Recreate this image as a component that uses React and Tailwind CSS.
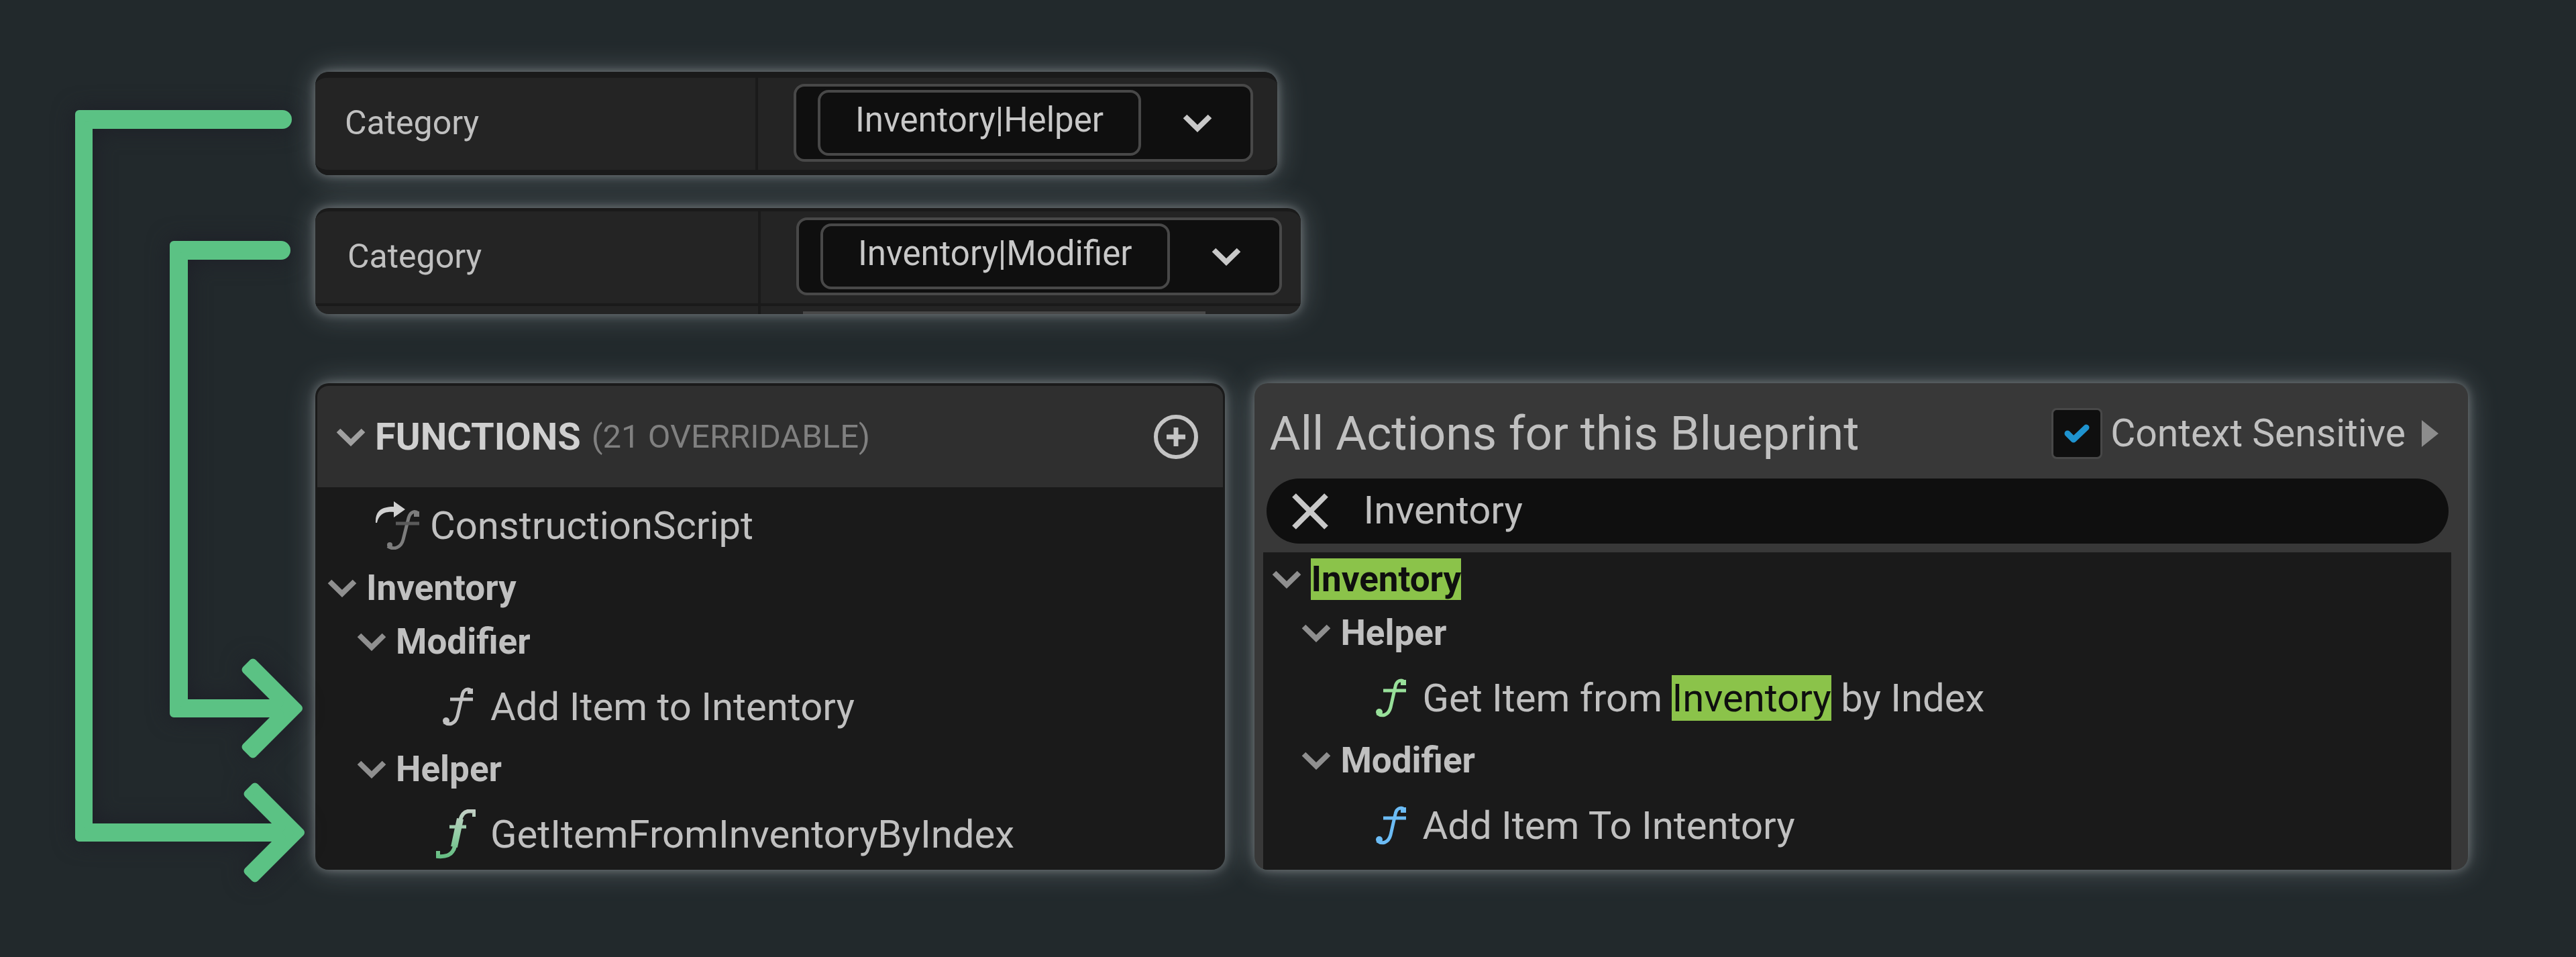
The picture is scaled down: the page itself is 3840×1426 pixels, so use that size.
import React, { useState } from 'react';

const Chevron = ({ className = '' }) => (
  <svg viewBox="0 0 44 28" className={`h-7 w-11 shrink-0 ${className}`} fill="none" aria-hidden="true">
    <path d="M3.5 4.5 22 22.5 40.5 4.5" stroke="currentColor" strokeWidth="8" />
  </svg>
);

const FunctionIcon = ({ className = '' }) => (
  <svg viewBox="0 0 46 58" className={`h-[58px] w-[46px] shrink-0 ${className}`} fill="none" aria-hidden="true">
    <path d="M44 6C40 1 32 2 30 12L23 43C20 54 11 58 3 52" stroke="currentColor" strokeWidth="5" />
    <path d="M12 18H46" stroke="currentColor" strokeWidth="5" />
    <path d="M38 2H46V10H38Z" fill="currentColor" />
    <circle cx="6" cy="50" r="5" fill="currentColor" />
  </svg>
);

const PureFunctionIcon = () => (
  <svg viewBox="0 0 60 74" className="h-[74px] w-[60px] shrink-0" fill="none" aria-hidden="true">
    <defs>
      <linearGradient id="pure" x1="0" y1="0" x2="0" y2="74" gradientUnits="userSpaceOnUse">
        <stop offset="0" stopColor="#c4cfc6" />
        <stop offset="0.5" stopColor="#93cda5" />
        <stop offset="1" stopColor="#62bc80" />
      </linearGradient>
    </defs>
    <path d="M58 11V3C47 1 40 4 37 16L29 55C26 68 17 71 4 70V62" stroke="url(#pure)" strokeWidth="6" />
    <path d="M37 14 28 56" stroke="url(#pure)" strokeWidth="10" />
    <path d="M21 26H46" stroke="url(#pure)" strokeWidth="5" />
  </svg>
);

const OverrideIcon = () => (
  <svg viewBox="0 0 66 72" className="h-[72px] w-[66px] shrink-0" fill="none" aria-hidden="true">
    <path d="M65 19C60 13 53 15 50 25L42 57C39 69 28 73 19 67" stroke="#7d7d7d" strokeWidth="5" />
    <path d="M31 33H66" stroke="#5a5a5a" strokeWidth="5" />
    <path d="M58 15H66V23H58Z" fill="#7d7d7d" />
    <circle cx="22" cy="65" r="4" fill="#7d7d7d" />
    <path d="M1 32C0 14 10 8 28 8V0L45 12 28 24V16C14 15 6 19 3 32Z" fill="#d0d0d0" />
  </svg>
);

const Arrows = () => (
  <svg
    viewBox="0 0 470 1426"
    className="w-[470px] shrink-0 self-start text-[#5bc284] drop-shadow-[0_0_16px_#1d1e27]"
    fill="currentColor"
    stroke="currentColor"
    strokeWidth="12"
    strokeLinejoin="round"
    aria-hidden="true"
  >
    <path d="M118 170H421A8 8 0 0 1 421 186H132V1233H419.5L369.5 1183 380 1172.5 448 1240.500 380 1308.500 369.5 1298 419.5 1248H118Z" />
    <path d="M259 365H419A8 8 0 0 1 419 381H274V1048H416.500L366.500 998 377 987.500 445 1055.500 377 1123.500 366.500 1113 416.500 1063H259Z" />
  </svg>
);

const panel =
  'overflow-hidden rounded-[20px] shadow-[0_0_14px_1px_rgba(255,255,255,0.26),0_0_44px_rgba(215,230,236,0.28)]';

const CategoryRow = ({ value, labelClass, fieldClass }) => (
  <div className="flex h-[137px] items-stretch bg-[#242424]">
    <div
      className={`flex shrink-0 items-center border-r-4 border-[#1a1a1a] pb-1 text-[50px] leading-[58px] text-[#c0c0c0] ${labelClass}`}
    >
      Category
    </div>
    <div className={`flex items-center pb-1 pl-[53px] ${fieldClass}`}>
      <button
        type="button"
        aria-label={`Category ${value}`}
        className="flex h-[116px] items-center rounded-2xl border-4 border-[#484848] bg-[#0f0f0f] pr-[57px] pl-8 text-[#c8c8c8]"
      >
        <span className="mr-[62px] flex h-[98px] items-center rounded-2xl border-4 border-[#484848] px-[52px] pb-2 text-[51px] leading-[58px]">
          {value}
        </span>
        <Chevron />
      </button>
    </div>
  </div>
);

const Group = ({ children, className }) => (
  <button
    type="button"
    aria-expanded="true"
    className={`flex h-20 w-full items-center gap-3.5 text-left text-[53px] leading-[62px] font-bold ${className}`}
  >
    <Chevron className="text-[#8f8f8f]" />
    <span>{children}</span>
  </button>
);

const Item = ({ icon, children, className }) => (
  <div className={`flex h-[110px] items-center pt-1 text-[58px] leading-[68px] whitespace-nowrap ${className}`}>
    {icon}
    <span>{children}</span>
  </div>
);

const Mark = ({ children }) => <mark className="inline-block bg-[#8bc34a] text-[#0f0f0f]">{children}</mark>;

const FunctionsPanel = () => (
  <section className={`border-x-3 border-t-4 border-[#1a1a1a] bg-[#1a1a1a] text-[#c0c0c0] ${panel}`}>
    <header className="flex h-[151px] items-center bg-[#2f2f2f] pr-9 pl-7">
      <Chevron className="text-[#a0a0a0]" />
      <h2 className="ml-3.5 text-[56px] leading-[62px] font-bold text-[#d0d0d0]">FUNCTIONS</h2>
      <span className="ml-4 text-[49px] leading-[62px] text-[#808080]">(21 OVERRIDABLE)</span>
      <button type="button" aria-label="Add function" className="ml-auto">
        <svg viewBox="0 0 68 68" className="size-[68px]" fill="none" stroke="#c4c4c4" aria-hidden="true">
          <circle cx="34" cy="34" r="30" strokeWidth="6" />
          <path d="M34 20V48M20 34H48" strokeWidth="7" />
        </svg>
      </button>
    </header>
    <Item icon={<OverrideIcon />} className="gap-4 pl-[86px]">ConstructionScript</Item>
    <Group className="pl-[15px]">Inventory</Group>
    <Group className="pl-[59px]">Modifier</Group>
    <Item icon={<FunctionIcon />} className="gap-[26px] pl-[186px]">Add Item to Intentory</Item>
    <Group className="pl-[59px]">Helper</Group>
    <Item icon={<PureFunctionIcon />} className="gap-[22px] pl-[176px]">GetItemFromInventoryByIndex</Item>
  </section>
);

const ActionsPanel = () => {
  const [query, setQuery] = useState('Inventory');
  const [contextSensitive, setContextSensitive] = useState(true);

  return (
    <section className={`flex flex-col bg-[#383838] text-[#c0c0c0] ${panel}`}>
      <header className="flex h-[142px] items-center pt-2 pr-11 pl-[22px]">
        <h2 className="text-[71px] leading-[88px]">All Actions for this Blueprint</h2>
        <label className="ml-auto flex items-center gap-3 text-[57px] leading-[62px]">
          <span className="relative flex size-[76px] items-center justify-center">
            <input
              type="checkbox"
              checked={contextSensitive}
              onChange={(e) => setContextSensitive(e.target.checked)}
              className="size-full appearance-none rounded-lg border-3 border-[#484848] bg-[#0f0f0f]"
            />
            {contextSensitive && (
              <svg viewBox="0 0 38 28" className="pointer-events-none absolute h-7 w-[38px]" fill="none" aria-hidden="true">
                <path d="M5 14 14 23 33 5" stroke="#1f93cf" strokeWidth="9" strokeLinecap="round" strokeLinejoin="round" />
              </svg>
            )}
          </span>
          Context Sensitive
        </label>
        <button type="button" aria-label="Show context" className="ml-6">
          <svg viewBox="0 0 25 40" className="h-10 w-[25px]" fill="#8c8c8c" aria-hidden="true">
            <path d="M0 0 25 20 0 40Z" />
          </svg>
        </button>
      </header>
      <div className="mr-[29px] ml-[18px] flex h-[97px] items-center rounded-full bg-[#0f0f0f] pl-[38px]">
        <button type="button" aria-label="Clear search" onClick={() => setQuery('')}>
          <svg viewBox="0 0 54 54" className="size-[54px]" fill="none" stroke="#c8c8c8" strokeWidth="8" aria-hidden="true">
            <path d="M3 3 51 51M51 3 3 51" />
          </svg>
        </button>
        <input
          type="text"
          aria-label="Search actions"
          value={query}
          onChange={(e) => setQuery(e.target.value)}
          className="ml-[52px] min-w-0 flex-1 bg-transparent pb-1 text-[58px] leading-[68px] outline-none"
        />
      </div>
      <div className="mt-[13px] mr-[25px] ml-[13px] flex-1 bg-[#1a1a1a]">
        <Group className="pl-[13px]"><Mark>Inventory</Mark></Group>
        <Group className="pl-[57px]">Helper</Group>
        <Item icon={<FunctionIcon className="text-[#98e09a]" />} className="gap-6 pl-[167px]">
          Get Item from <Mark>Inventory</Mark> by Index
        </Item>
        <Group className="pl-[57px]">Modifier</Group>
        <Item icon={<FunctionIcon className="text-[#6cbcf5]" />} className="gap-6 pl-[167px]">
          Add Item To Intentory
        </Item>
      </div>
    </section>
  );
};

export default function App() {
  return (
    <main className="flex min-h-screen bg-[#22292c] font-[Roboto,sans-serif]">
      <Arrows />
      <div className="min-w-0 flex-1 pt-[107px] pr-[161px]">
        <div className={`w-fit border-t-9 border-b-8 border-[#1a1a1a] ${panel}`}>
          <CategoryRow value="Inventory|Helper" labelClass="w-[660px] pl-11" fieldClass="pr-9" />
        </div>
        <div className={`mt-[49px] w-fit border-t-5 border-[#1a1a1a] bg-[#242424] ${panel}`}>
          <CategoryRow value="Inventory|Modifier" labelClass="w-[664px] pl-12" fieldClass="pr-7" />
          <div className="flex h-4 border-t-4 border-[#1a1a1a]">
            <div className="w-[664px] border-r-4 border-[#1a1a1a]" />
            <div className="mr-[142px] ml-[63px] flex-1 self-end border-t-4 border-[#484848]" />
          </div>
        </div>
        <div className="mt-[103px] grid grid-cols-[3fr_4fr] gap-11">
          <FunctionsPanel />
          <ActionsPanel />
        </div>
      </div>
    </main>
  );
}
